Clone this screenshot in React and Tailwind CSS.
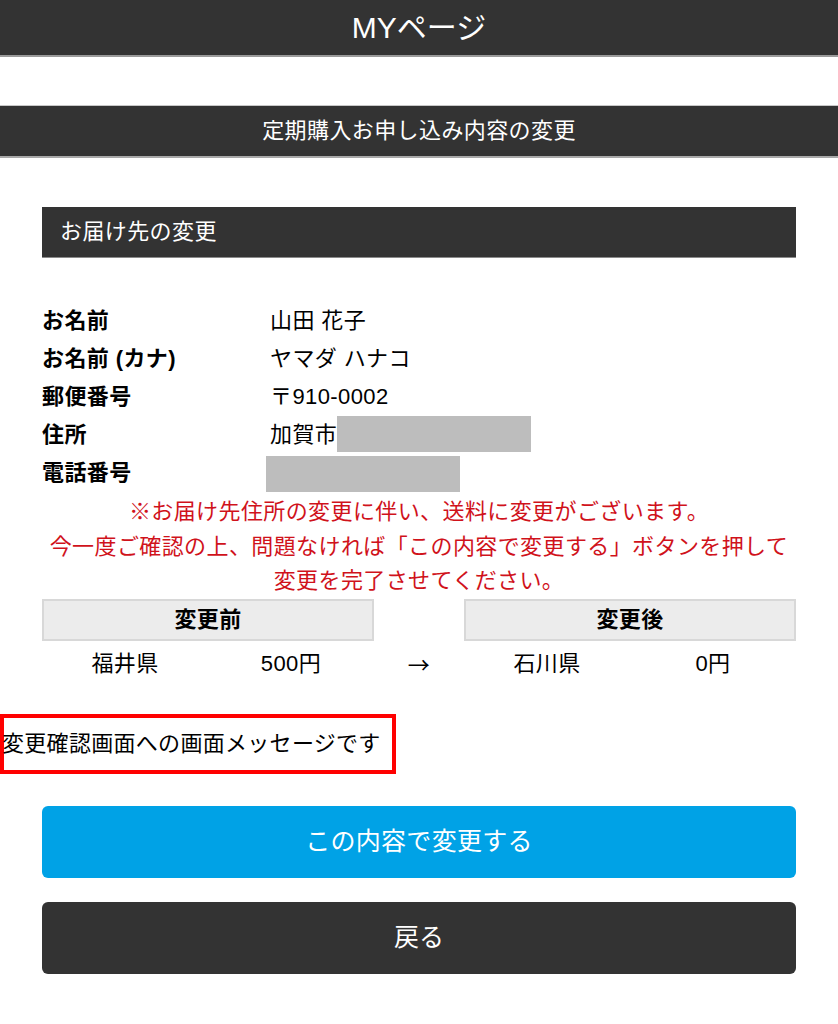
import React from 'react';

const font = { fontFamily: '"Liberation Sans", "Noto Sans CJK JP", sans-serif' };

const rows = [
  { label: 'お名前', value: '山田 花子' },
  { label: 'お名前 (カナ)', value: 'ヤマダ ハナコ' },
  { label: '郵便番号', value: '〒910-0002' },
  { label: '住所', value: '加賀市', masked: 'inline' },
  { label: '電話番号', masked: 'block' },
];

const App = () => {
  return (
    <div className="w-[838px] min-h-[1024px] bg-white text-black font-['Liberation_Sans','Noto_Sans_CJK_JP',sans-serif]">
      {/* top bar */}
      <header className="h-[57px] bg-[#333333] border-b-2 border-[#9a9a9a] flex items-center justify-center">
        <h1 className="text-white text-[30px] leading-none">MYページ</h1>
      </header>

      <div className="mt-[48px] h-[53px] bg-[#333333] border-t border-[#c8c8c8] border-b-2 border-b-[#a8a8a8] flex items-center justify-center">
        <h2 className="text-white text-[22px] tracking-[0.4px] leading-none">定期購入お申し込み内容の変更</h2>
      </div>

      <div className="px-[42px]">
        {/* section title */}
        <div className="mt-[49px] h-[51px] bg-[#333333] border-b border-[#8a8a8a] flex items-center pl-[18px]">
          <h3 className="text-white text-[22px] tracking-[0.4px] leading-none">お届け先の変更</h3>
        </div>

        {/* address info */}
        <dl className="mt-[43px]">
          {rows.map((row) => (
            <div key={row.label} className="flex h-[38px] items-center text-[22px] tracking-[0.4px]">
              <dt className="w-[228px] font-bold">{row.label}</dt>
              <dd className="flex items-center">
                {row.value && <span>{row.value}</span>}
                {row.masked === 'inline' && <span className="inline-block w-[194px] h-[36px] bg-[#bdbdbd]" />}
                {row.masked === 'block' && <span className="-ml-[4px] mt-[3px] inline-block w-[194px] h-[36px] bg-[#bdbdbd]" />}
              </dd>
            </div>
          ))}
        </dl>

        <p className="mt-[4px] text-center text-[22px] tracking-[0.4px] leading-[34.5px] text-[#d0121b] whitespace-nowrap">
          ※お届け先住所の変更に伴い、送料に変更がございます。<br />
          今一度ご確認の上、問題なければ「この内容で変更する」ボタンを押して<br />
          変更を完了させてください。
        </p>

        {/* shipping fee compare */}
        <div className="grid grid-cols-[332px_1fr_332px] text-[22px] tracking-[0.4px]">
          <div className="h-[42px] bg-[#ececec] border-2 border-[#d8d8d8] flex items-center justify-center font-bold">変更前</div>
          <div />
          <div className="h-[42px] bg-[#ececec] border-2 border-[#d8d8d8] flex items-center justify-center font-bold">変更後</div>

          <div className="grid grid-cols-2 h-[46px] items-center text-center">
            <span>福井県</span>
            <span>500円</span>
          </div>
          <div className="h-[46px] flex items-center justify-center font-['Noto_Sans_CJK_JP',sans-serif]">→</div>
          <div className="grid grid-cols-2 h-[46px] items-center text-center">
            <span>石川県</span>
            <span>0円</span>
          </div>
        </div>
      </div>

      {/* message box */}
      <div className="mt-[27px] w-[396px] h-[60px] border-4 border-[#ff0000] flex items-center">
        <p className="-ml-[2px] text-[22px] tracking-[0.3px] leading-none whitespace-nowrap" style={font}>変更確認画面への画面メッセージです</p>
      </div>

      <div className="px-[42px] pb-[51px]">
        <button className="mt-[32px] w-full h-[72px] rounded-md bg-[#00a2e6] text-white text-[25px] tracking-[0.3px] flex items-center justify-center">
          この内容で変更する
        </button>
        <button className="mt-[24px] w-full h-[72px] rounded-md bg-[#333333] text-white text-[25px] flex items-center justify-center">
          戻る
        </button>
      </div>
    </div>
  );
};

export default App;
